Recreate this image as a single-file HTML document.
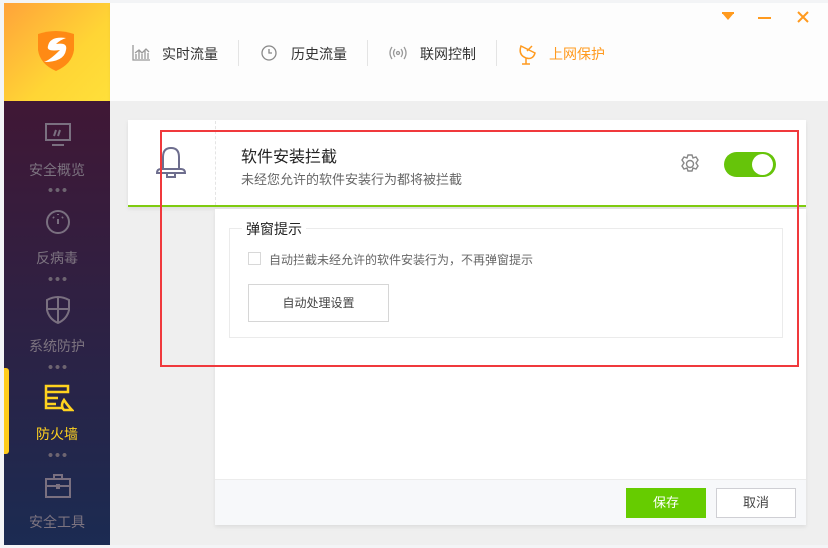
<!DOCTYPE html><html><head><meta charset="utf-8"><style>
*{margin:0;padding:0;box-sizing:border-box}
body{width:828px;height:548px;overflow:hidden;background:#f3f4f6;font-family:"Liberation Sans","Noto Sans CJK SC",sans-serif;position:relative}
.abs{position:absolute}
.side{left:4px;top:3px;width:106px;height:542px;background:linear-gradient(#48132f,#1b2b52)}
.logo{left:4px;top:3px;width:106px;height:98px;background:linear-gradient(135deg,#ffa33a,#ffd535 60%,#ffe03a)}
.nav{left:4px;width:106px;text-align:center;color:#7d7480;font-size:14px}
.dots{left:47px;width:20px;height:4px;background:radial-gradient(circle,#6d6470 1.8px,transparent 2.2px) 0 0/7px 4px repeat-x}
.hdr{left:110px;top:3px;width:718px;height:98px;background:#fdfdfd;box-shadow:0 2px 3px rgba(0,0,0,.06)}
.tab{top:44px;font-size:14px;color:#333}
.sep{top:40px;width:1px;height:26px;background:#e4e4e4}
.main{left:110px;top:101px;width:718px;height:444px;background:#efefef}
</style></head><body>
<div class="abs side"></div>
<div class="abs logo"></div>
<svg class="abs" style="left:36px;top:30px" width="40" height="42" viewBox="0 0 40 42"><path d="M2 4 Q20 -2 38 4 L38 20 Q36 34 20 41 Q4 34 2 20Z" fill="#ff8a14"/><path d="M30 8 Q14 6 12 16 Q10 22 24 20 Q14 30 8 32 Q28 32 30 20 Q32 12 20 14 Q24 10 30 8Z" fill="#fff"/></svg>
<svg class="abs" style="left:44px;top:122px" width="28" height="26" fill="none" stroke="#7a7080" stroke-width="2"><rect x="2" y="2" width="24" height="16"/><path d="M8 23h12M12 8l-2 6M16 8l-2 6"/></svg>
<div class="abs nav" style="top:160px">安全概览</div><div class="abs dots" style="top:188px"></div>
<svg class="abs" style="left:44px;top:208px" width="28" height="28" fill="none" stroke="#7a7080" stroke-width="2"><circle cx="14" cy="14" r="11"/><path d="M14 16l0-5M9 9l1 1M19 9l-1 1M14 6v1"/></svg>
<div class="abs nav" style="top:248px">反病毒</div><div class="abs dots" style="top:277px"></div>
<svg class="abs" style="left:44px;top:294px" width="28" height="30" fill="none" stroke="#7a7080" stroke-width="2"><path d="M3 6Q14 0 25 6V16Q23 25 14 29Q5 25 3 16Z M14 3V28M3 15H25"/></svg>
<div class="abs nav" style="top:336px">系统防护</div><div class="abs dots" style="top:365px"></div>
<div class="abs" style="left:4px;top:368px;width:5px;height:86px;background:#ffcc1a;border-radius:0 3px 3px 0"></div>
<svg class="abs" style="left:44px;top:384px" width="30" height="28" fill="none" stroke="#ffd21f" stroke-width="2.5"><path d="M2 2H24V8H2ZM2 8V24H18M2 14H14M2 20H12"/><path d="M20 26Q16 22 20 16Q24 22 28 26Z"/></svg>
<div class="abs nav" style="top:424px;color:#ffd21f">防火墙</div><div class="abs dots" style="top:453px"></div>
<svg class="abs" style="left:44px;top:472px" width="28" height="28" fill="none" stroke="#7a7080" stroke-width="2"><rect x="2" y="7" width="24" height="18"/><path d="M10 7V3H18V7M2 14H26M13 13h2v3h-2z"/></svg>
<div class="abs nav" style="top:512px">安全工具</div>
<div class="abs hdr"></div>
<svg class="abs" style="left:132px;top:45px" width="18" height="16" fill="none" stroke="#999" stroke-width="1.3"><path d="M1 0V15H18M4 14V9M7 14V6M10 14V9M13 14V5M16 14V8M3 8L7 5L10 8L14 4L17 7"/></svg>
<div class="abs tab" style="left:162px">实时流量</div><div class="abs sep" style="left:238px"></div>
<svg class="abs" style="left:261px;top:45px" width="16" height="16" fill="none" stroke="#888" stroke-width="1.3"><circle cx="8" cy="8" r="7"/><path d="M8 4V8H11"/></svg>
<div class="abs tab" style="left:291px">历史流量</div><div class="abs sep" style="left:367px"></div>
<svg class="abs" style="left:389px;top:45px" width="18" height="16" fill="none" stroke="#999" stroke-width="1.3"><circle cx="9" cy="8" r="1.5"/><path d="M6 4Q3 8 6 12M12 4Q15 8 12 12M3 2Q-1 8 3 14M15 2Q19 8 15 14"/></svg>
<div class="abs tab" style="left:420px">联网控制</div><div class="abs sep" style="left:496px"></div>
<svg class="abs" style="left:518px;top:43px" width="18" height="22" fill="none" stroke="#ff9a1e" stroke-width="1.5"><path d="M3 3Q0 12 8 15Q15 17 17 10Z M8 15V21M4 21H12M9 8L14 3"/></svg>
<div class="abs tab" style="left:549px;color:#ff9a1e">上网保护</div>
<div class="abs" style="left:722px;top:13px;width:0;height:0;border-left:6px solid transparent;border-right:6px solid transparent;border-top:7px solid #ff9a1e"></div>
<div class="abs" style="left:722px;top:12px;width:12px;height:2px;background:#ff9a1e"></div>
<div class="abs" style="left:758px;top:17px;width:13px;height:2px;background:#ff9a1e"></div>
<svg class="abs" style="left:797px;top:11px" width="12" height="12" stroke="#ff9a1e" stroke-width="2"><path d="M1 1L11 11M11 1L1 11"/></svg>
<div class="abs main"></div>
<div class="abs" style="left:128px;top:120px;width:678px;height:87px;background:#fff;border-bottom:2px solid #7fcb10;box-shadow:0 2px 4px rgba(0,0,0,.08)"></div>
<div class="abs" style="left:215px;top:121px;width:0;height:84px;border-left:1px dashed #e4e4e4"></div>
<svg class="abs" style="left:154px;top:145px" width="34" height="34" fill="none" stroke="#6e6e8e" stroke-width="2"><path d="M9 24V12Q9 3 17 3Q25 3 25 12V24ZM3 28Q3 24 7 24H27Q31 24 31 28ZM13 28V32H21V28"/></svg>
<div class="abs" style="left:241px;top:143px;font-size:16px;color:#222">软件安装拦截</div>
<div class="abs" style="left:241px;top:169px;font-size:13px;color:#666">未经您允许的软件安装行为都将被拦截</div>
<svg class="abs" style="left:679px;top:153px" width="22" height="22" fill="none" stroke="#888" stroke-width="1.4"><circle cx="11" cy="11" r="3.5"/><path d="M9 2h4l1 3 3-1 2 3-2 3 2 3-2 3-3-1-1 3H9l-1-3-3 1-2-3 2-3-2-3 2-3 3 1z"/></svg>
<div class="abs" style="left:724px;top:152px;width:52px;height:25px;border-radius:13px;background:#66c40a"></div>
<div class="abs" style="left:752px;top:154px;width:21px;height:21px;border-radius:50%;background:#fff"></div>
<div class="abs" style="left:215px;top:209px;width:591px;height:316px;background:#fff;box-shadow:0 2px 4px rgba(0,0,0,.08)"></div>
<div class="abs" style="left:229px;top:228px;width:554px;height:110px;border:1px solid #ebebeb"></div>
<div class="abs" style="left:242px;top:219px;font-size:14px;color:#222;background:#fff;padding:0 4px">弹窗提示</div>
<div class="abs" style="left:248px;top:252px;width:13px;height:13px;border:1px solid #d8d8d8"></div>
<div class="abs" style="left:269px;top:251px;font-size:12px;color:#666">自动拦截未经允许的软件安装行为，不再弹窗提示</div>
<div class="abs" style="left:248px;top:284px;width:141px;height:38px;border:1px solid #d6d6d6;font-size:12px;color:#444;text-align:center;line-height:36px">自动处理设置</div>
<div class="abs" style="left:215px;top:479px;width:591px;height:46px;background:#f7f8fa;border-top:1px solid #ececec"></div>
<div class="abs" style="left:626px;top:488px;width:80px;height:30px;background:#66cc00;color:#fff;font-size:13px;text-align:center;line-height:30px">保存</div>
<div class="abs" style="left:716px;top:488px;width:80px;height:30px;border:1px solid #cfcfd4;background:#fff;color:#444;font-size:13px;text-align:center;line-height:28px">取消</div>
<div class="abs" style="left:160px;top:130px;width:639px;height:237px;border:2px solid #f0393c"></div>
</body></html>
